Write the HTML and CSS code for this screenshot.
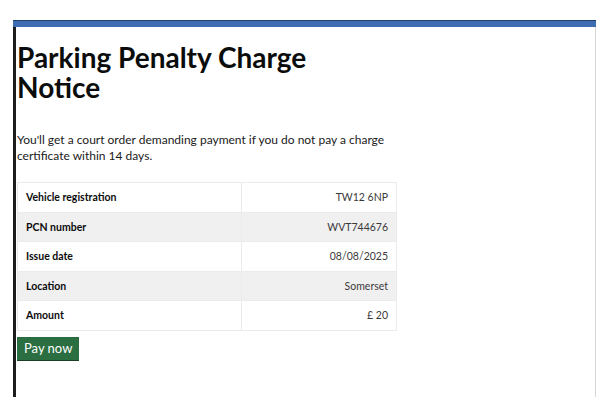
FILE: index.html
```html
<!DOCTYPE html>
<html lang="en">
<head>
    <meta charset="UTF-8">
    <meta name="viewport" content="width=device-width, initial-scale=1.0">
    <title>Parking Penalty Charge Notice</title>
    <link rel="stylesheet" href="styles.css">
</head>
<body>
    <div class="page">
        <div class="top-bar"></div>
        <div class="content">
            <h1>Parking Penalty Charge<br>Notice</h1>
            <p class="warning">You'll get a court order demanding payment if you do not pay a charge certificate within 14 days.</p>
            <table class="details">
                <tbody>
                    <tr>
                        <th>Vehicle registration</th>
                        <td>TW12 6NP</td>
                    </tr>
                    <tr>
                        <th>PCN number</th>
                        <td>WVT744676</td>
                    </tr>
                    <tr>
                        <th>Issue date</th>
                        <td>08/08/2025</td>
                    </tr>
                    <tr>
                        <th>Location</th>
                        <td>Somerset</td>
                    </tr>
                    <tr>
                        <th>Amount</th>
                        <td>£ 20</td>
                    </tr>
                </tbody>
            </table>
            <button class="pay-now">Pay now</button>
        </div>
    </div>
</body>
</html>
```

FILE: styles.css
```css
body {
    margin: 0;
    font-family: Lato, Arial, sans-serif;
    background-color: #ffffff;
    color: #0b0c0c;
}
.page {
    margin: 20px 0 0 13px;
    width: 583px;
    height: 377px;
    border-left: 3px solid #1d1d1d;
    border-right: 1px solid #d6d6d6;
    box-sizing: border-box;
}
.top-bar {
    height: 6px;
    background-color: #3d6cb0;
    border-top: 1px solid #1f3f6e;
    margin-left: -3px;
    margin-right: -1px;
}
.content {
    padding: 0 0 0 1px;
}
h1 {
    font-size: 28px;
    line-height: 30px;
    font-weight: 700;
    margin: 15px 0 0;
}
.warning {
    font-size: 12px;
    line-height: 16px;
    width: 378px;
    margin: 30px 0 18px;
    color: #1a1a1a;
}
.details {
    width: 380px;
    border-collapse: collapse;
    font-size: 10.5px;
}
.details th,
.details td {
    height: 29.5px;
    padding: 0 8px;
    border: 1px solid #ebebeb;
    box-sizing: border-box;
}
.details th {
    width: 224px;
    text-align: left;
    font-weight: 700;
}
.details td {
    text-align: right;
    color: #3a3a3a;
}
.details tr:nth-child(even) {
    background-color: #f1f0f1;
}
.pay-now {
    display: block;
    margin-top: 6px;
    padding: 0 7px;
    height: 24px;
    font-family: Lato, Arial, sans-serif;
    font-size: 13px;
    color: #ffffff;
    background-color: #2b6e42;
    border: none;
    border-bottom: 1px solid #1b3f26;
    border-radius: 0;
    cursor: pointer;
}
```
